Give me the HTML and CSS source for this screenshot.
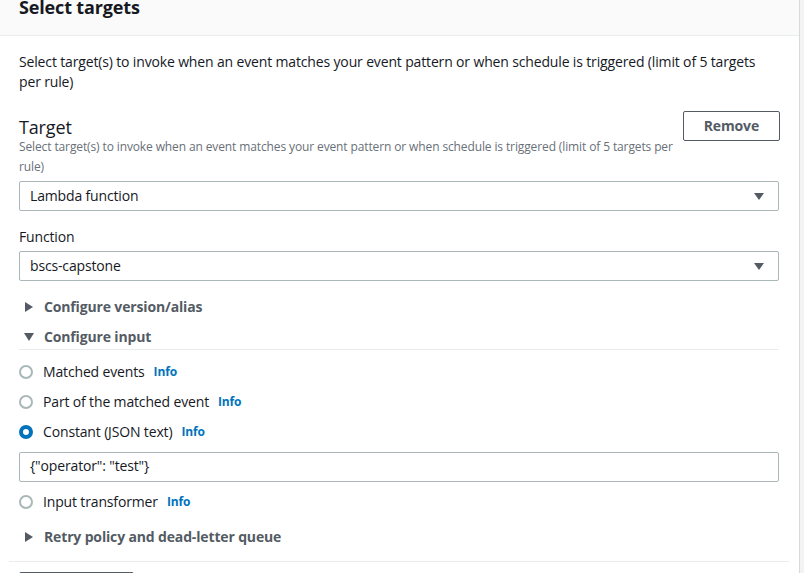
FILE: index.html
```html
<!DOCTYPE html>
<html lang="en">
<head>
<meta charset="utf-8">
<title>Select targets</title>
<link rel="stylesheet" href="styles.css">
</head>
<body>
<div class="panel">
  <div class="panel-header"><h2 class="panel-title">Select targets</h2></div>
  <div class="panel-body">
    <p class="intro">Select target(s) to invoke when an event matches your event pattern or when schedule is triggered (limit of 5 targets per rule)</p>
    <div class="target">
      <div class="target-head">
        <div class="target-title-col">
          <h3 class="target-title">Target</h3>
          <p class="target-desc">Select target(s) to invoke when an event matches your event pattern or when schedule is triggered (limit of 5 targets per rule)</p>
        </div>
        <button class="btn">Remove</button>
      </div>
      <div class="select"><span>Lambda function</span><span class="caret"></span></div>
      <div class="field">
        <label class="field-label">Function</label>
        <div class="select"><span>bscs-capstone</span><span class="caret"></span></div>
      </div>
      <div class="expanders">
        <div class="expander"><span class="tri-right"></span>Configure version/alias</div>
        <div class="expander expander-open"><span class="tri-down"></span>Configure input</div>
      </div>
      <div class="radios">
        <div class="radio-row"><span class="radio"></span><span class="radio-label">Matched events</span><a class="info">Info</a></div>
        <div class="radio-row"><span class="radio"></span><span class="radio-label">Part of the matched event</span><a class="info">Info</a></div>
        <div class="radio-row"><span class="radio radio-on"></span><span class="radio-label">Constant (JSON text)</span><a class="info">Info</a></div>
        <div class="input">{"operator": "test"}</div>
        <div class="radio-row"><span class="radio"></span><span class="radio-label">Input transformer</span><a class="info">Info</a></div>
      </div>
      <div class="expander expander-last"><span class="tri-right"></span>Retry policy and dead-letter queue</div>
    </div>
    <div class="add-row"><button class="btn">Add target</button></div>
  </div>
</div>
</body>
</html>
```

FILE: styles.css
```css
* { box-sizing: border-box; }
html, body { margin: 0; padding: 0; }
body {
  background: #f2f3f3;
  font-family: "Open Sans", "Noto Sans", "Liberation Sans", sans-serif;
  letter-spacing: -0.15px;
  color: #16191f;
  font-size: 14px;
  line-height: 20px;
  overflow: hidden;
  height: 573px;
}
.panel {
  width: 800px;
  margin-top: -24px;
  background: #fff;
  border-right: 1px solid #d5dbdb;
}
.panel-header {
  background: #fafafa;
  border-bottom: 1px solid #eaeded;
  padding: 20px 19px 17px;
}
.panel-title {
  margin: 0;
  font-size: 18px;
  line-height: 22px;
  font-weight: 700;
}
.panel-body {
  padding-top: 16px;
}
.intro {
  margin: 0;
  padding: 0 19px;
}
.target {
  margin: 19px 10px 0 9px;
  padding: 0 10px 11px;
  border-bottom: 1px solid #eaeded;
  display: flex;
  flex-direction: column;
}
.target-head {
  display: flex;
  justify-content: space-between;
  align-items: flex-start;
  gap: 4px;
}
.target-title-col { padding-top: 6px; flex: 1; }
.target-title {
  margin: 0;
  font-size: 18px;
  line-height: 20px;
  font-weight: 400;
}
.target-desc {
  margin: 0;
  font-size: 12px;
  line-height: 20px;
  color: #687078;
  letter-spacing: -0.12px;
}
.btn {
  font-family: inherit;
  letter-spacing: inherit;
  font-size: 14px;
  line-height: 20px;
  font-weight: 700;
  color: #545b64;
  background: #fff;
  border: 1px solid #545b64;
  border-radius: 2px;
  padding: 4px 20px;
  margin-right: -1px;
}
.select {
  margin-top: 4px;
  border: 1px solid #aab7b8;
  border-radius: 2px;
  padding: 4px 14px 4px 10px;
  display: flex;
  justify-content: space-between;
  align-items: center;
}
.caret {
  width: 0; height: 0;
  border-left: 5px solid transparent;
  border-right: 5px solid transparent;
  border-top: 7px solid #545b64;
  margin-top: 1px;
}
.field { margin-top: 16px; }
.field-label { display: block; }
.expanders { margin-top: 11px; }
.expander {
  padding: 5px 0;
  font-weight: 700;
  color: #545b64;
  display: flex;
  align-items: center;
}
.expander-open { border-bottom: 1px solid #eaeded; padding-bottom: 2px; }
.expander-last { margin-top: 10px; padding-bottom: 3px; }
.tri-right {
  width: 0; height: 0;
  border-top: 5px solid transparent;
  border-bottom: 5px solid transparent;
  border-left: 8px solid #545b64;
  margin: 0 11px 0 6px;
}
.tri-down {
  width: 0; height: 0;
  border-left: 5px solid transparent;
  border-right: 5px solid transparent;
  border-top: 8px solid #545b64;
  margin: 0 10px 0 5px;
}
.radios {
  margin-top: 12px;
  display: flex;
  flex-direction: column;
  gap: 10px;
}
.radio-row { display: flex; align-items: center; }
.radio {
  width: 14px; height: 14px;
  border-radius: 50%;
  border: 2px solid #aab7b8;
  margin-right: 10px;
}
.radio-on { border: 4px solid #0073bb; }
.info {
  font-size: 12px;
  font-weight: 700;
  color: #0073bb;
  margin-left: 9px;
}
.input {
  border: 1px solid #aab7b8;
  border-radius: 2px;
  padding: 3px 10px 5px;
}
.add-row { padding: 10px 19px 0; }
```
